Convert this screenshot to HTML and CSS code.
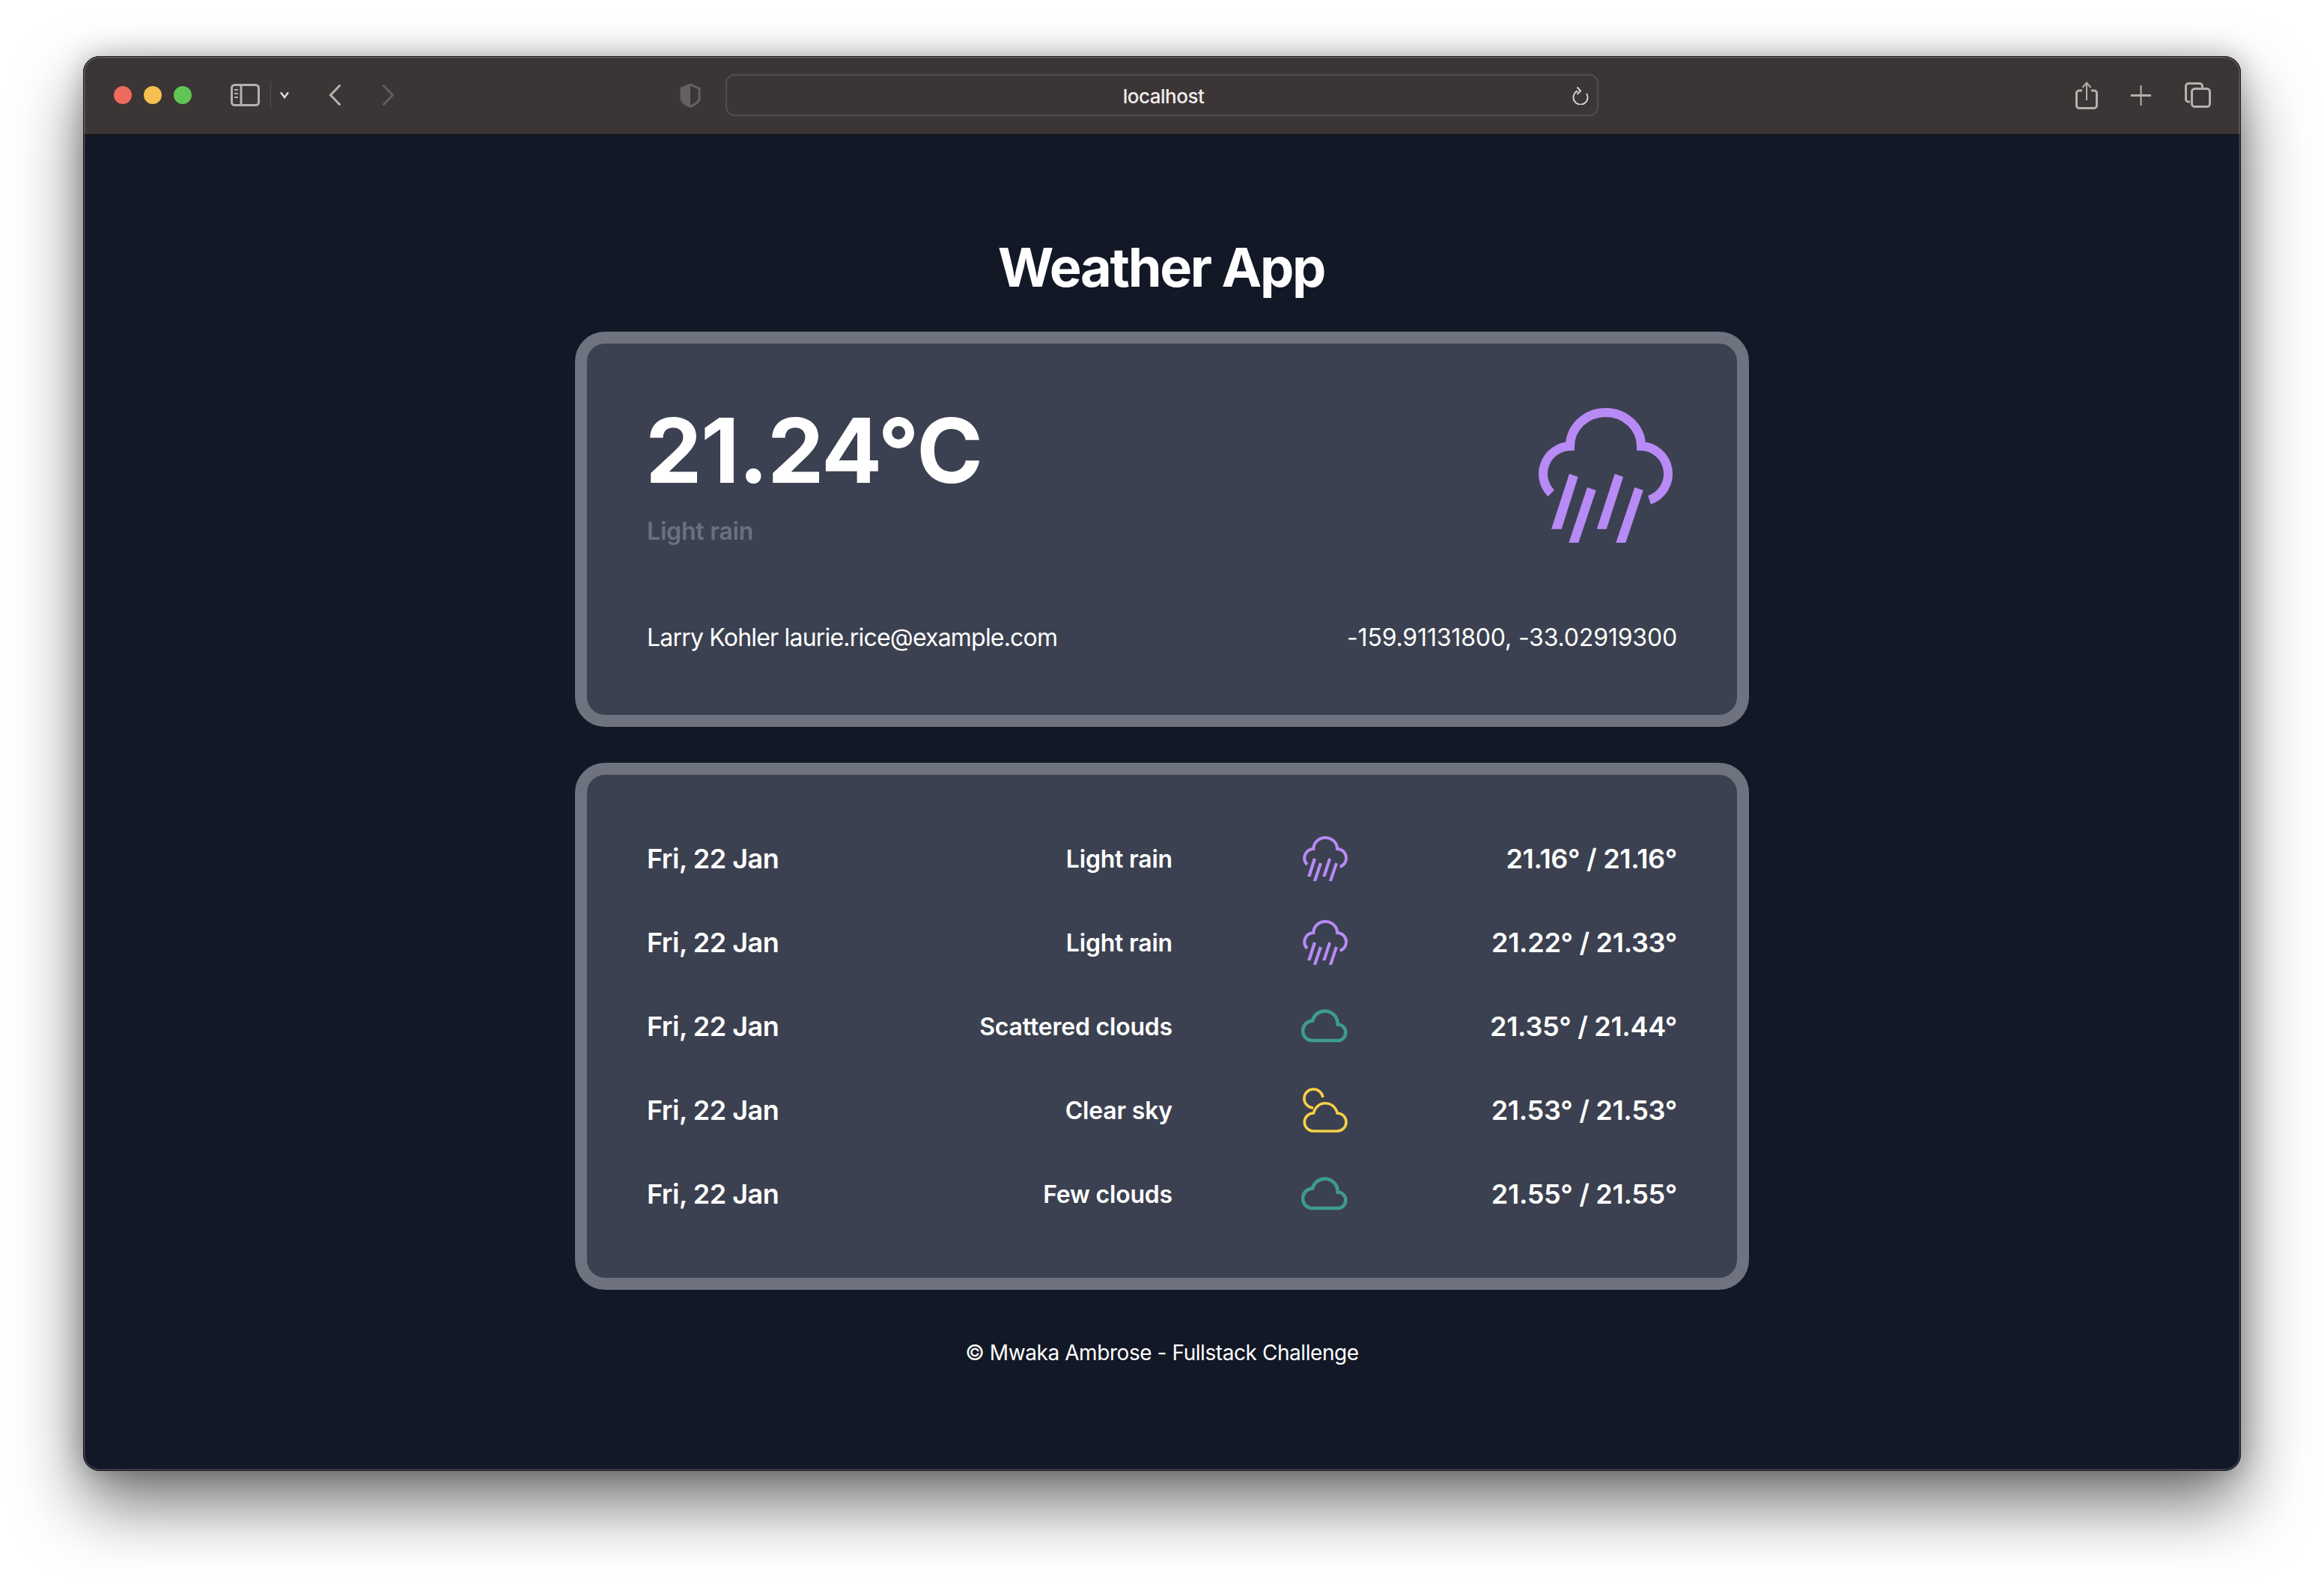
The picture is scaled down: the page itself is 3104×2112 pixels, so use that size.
FILE: index.html
```html
<!DOCTYPE html>
<html lang="en">
<head>
    <meta charset="UTF-8">
    <meta name="viewport" content="width=device-width, initial-scale=1.0">
    <title>Weather App</title>
    <link rel="stylesheet" href="styles.css">
</head>
<body>
    <svg class="icon-defs" width="0" height="0">
        <symbol id="icon-rain" viewBox="-6 -6 192 192">
            <path class="line" stroke-width="12" d="M17.7 114A37 37 0 0 1 43 51A47.500 45 0 0 1 138 51A37 37 0 0 1 149 123"/>
            <polygon class="solid" points="42,88 53.7,92 31.7,161.7 18,161.7"/>
            <polygon class="solid" points="66,106 77.7,110 54.3,180 41.3,180"/>
            <polygon class="solid" points="102.7,88 114,92 91.7,161.7 78.7,161.7"/>
            <polygon class="solid" points="129.3,106 140.7,110 117.3,180 104.3,180"/>
        </symbol>
        <symbol id="icon-cloud" viewBox="0 -11 64 64">
            <path class="line" stroke-width="4.6" d="M13 40A13.3 13.3 0 0 1 15 13.6A17 17 0 0 1 48.5 18.5A10.8 10.8 0 0 1 50 40Z"/>
        </symbol>
        <symbol id="icon-sun-cloud" viewBox="-2 -2 64 64">
            <path class="line" stroke-width="3.6" d="M14 27A12.5 12.5 0 1 1 26.8 13"/>
            <path class="line" stroke-width="3.6" d="M14 58A12 12 0 0 1 14.5 34A16 16 0 0 1 46 34A12 12 0 0 1 46 58Z"/>
        </symbol>
    </svg>

    <div class="window">
        <!-- Browser toolbar -->
        <header class="toolbar">
            <div class="traffic">
                <span class="dot dot-red"></span>
                <span class="dot dot-yellow"></span>
                <span class="dot dot-green"></span>
            </div>
            <svg class="tb-sidebar" width="39" height="30" viewBox="0 0 39 30">
                <rect x="1.5" y="1.5" width="36" height="27" rx="4" class="tb-stroke" stroke-width="3"/>
                <path class="tb-stroke" stroke-width="3" d="M14 2V28"/>
                <path class="tb-stroke" stroke-width="2" d="M5 8H10M5 13H10M5 18H10"/>
            </svg>
            <span class="tb-sep"></span>
            <svg class="tb-chevron" width="14" height="10" viewBox="0 0 14 10">
                <path fill="none" stroke="#e4e1e0" stroke-width="2.4" d="M2 1.5L7 8L12 1.5"/>
            </svg>
            <svg class="tb-back" width="16" height="28" viewBox="0 0 16 28">
                <path class="tb-stroke" stroke-width="3" stroke-linecap="round" d="M14.5 1.5L2.5 14L14.5 26.5"/>
            </svg>
            <svg class="tb-forward" width="16" height="28" viewBox="0 0 16 28">
                <path fill="none" stroke="#625d5d" stroke-width="3" stroke-linecap="round" d="M1.5 1.5L13.5 14L1.5 26.5"/>
            </svg>
            <svg class="tb-shield" width="28" height="33" viewBox="0 0 28 33">
                <path fill="none" stroke="#656161" stroke-width="3" d="M14 2L26 7V21C26 25 20 29 14 31C8 29 2 25 2 21V7Z"/>
                <path fill="#656161" d="M14 2L2 7V21C2 25 8 29 14 31Z"/>
            </svg>
            <div class="address">
                <span></span>
                <span class="address-text">localhost</span>
                <svg class="tb-reload" width="23" height="25" viewBox="0 0 23 25">
                    <path fill="none" stroke="#d6d3d2" stroke-width="2" d="M8 6.5A9.5 9.5 0 1 0 20 10"/>
                    <path fill="none" stroke="#d6d3d2" stroke-width="2" d="M7.5 1.5L12 6.5L7.5 11"/>
                </svg>
            </div>
            <svg class="tb-share" width="30" height="37" viewBox="0 0 30 37">
                <path class="tb-stroke" stroke-width="3" d="M9 12H5A3.5 3.5 0 0 0 1.5 15.5V32A3.5 3.5 0 0 0 5 35.5H25A3.5 3.5 0 0 0 28.5 32V15.5A3.5 3.5 0 0 0 25 12H21"/>
                <path class="tb-stroke" stroke-width="2" d="M15 2V25M9.5 8L15 1.5L20.500 8"/>
            </svg>
            <svg class="tb-plus" width="27" height="27" viewBox="0 0 27 27">
                <path class="tb-stroke" stroke-width="2" d="M13.500 0V27"/>
                <path class="tb-stroke" stroke-width="3" d="M0 13.500H27"/>
            </svg>
            <svg class="tb-tabs" width="35" height="34" viewBox="0 0 35 34">
                <path class="tb-stroke" stroke-width="3" d="M7 26H5A3.500 3.500 0 0 1 1.500 22.500V5A3.500 3.500 0 0 1 5 1.500H20A3.500 3.500 0 0 1 23.500 5V8"/>
                <rect x="9.500" y="8.500" width="24" height="24" rx="4" class="tb-stroke" stroke-width="3"/>
            </svg>
        </header>

        <!-- Page -->
        <main class="page">
            <h1 class="title">Weather App</h1>

            <section class="card current">
                <div class="current-top">
                    <div>
                        <div class="current-temp">21.24°C</div>
                        <div class="current-desc">Light rain</div>
                    </div>
                    <svg class="icon-large purple"><use href="#icon-rain"/></svg>
                </div>
                <div class="current-bottom">
                    <span class="current-user">Larry Kohler laurie.rice@example.com</span>
                    <span class="current-coords">-159.91131800, -33.02919300</span>
                </div>
            </section>

            <section class="card forecast">
                <div class="row">
                    <span class="row-date">Fri, 22 Jan</span>
                    <span class="row-desc">Light rain</span>
                    <svg class="row-icon purple"><use href="#icon-rain"/></svg>
                    <span class="row-temp">21.16° / 21.16°</span>
                </div>
                <div class="row">
                    <span class="row-date">Fri, 22 Jan</span>
                    <span class="row-desc">Light rain</span>
                    <svg class="row-icon purple"><use href="#icon-rain"/></svg>
                    <span class="row-temp">21.22° / 21.33°</span>
                </div>
                <div class="row">
                    <span class="row-date">Fri, 22 Jan</span>
                    <span class="row-desc">Scattered clouds</span>
                    <svg class="row-icon teal"><use href="#icon-cloud"/></svg>
                    <span class="row-temp">21.35° / 21.44°</span>
                </div>
                <div class="row">
                    <span class="row-date">Fri, 22 Jan</span>
                    <span class="row-desc">Clear sky</span>
                    <svg class="row-icon yellow"><use href="#icon-sun-cloud"/></svg>
                    <span class="row-temp">21.53° / 21.53°</span>
                </div>
                <div class="row">
                    <span class="row-date">Fri, 22 Jan</span>
                    <span class="row-desc">Few clouds</span>
                    <svg class="row-icon teal"><use href="#icon-cloud"/></svg>
                    <span class="row-temp">21.55° / 21.55°</span>
                </div>
            </section>

            <footer class="footer">© Mwaka Ambrose - Fullstack Challenge</footer>
        </main>
    </div>
</body>
</html>
```

FILE: styles.css
```css
* {
    box-sizing: border-box;
}
html, body {
    margin: 0;
    height: 100%;
}
body {
    background-color: #fff;
    font-family: Inter, "Noto Sans", sans-serif;
    color: #fff;
    padding: 75px 111px 147px 111px;
    overflow: hidden;
}
.icon-defs {
    display: block;
}
.line {
    fill: none;
    stroke: currentColor;
}
.solid {
    fill: currentColor;
}
.purple {
    color: #b88af6;
}
.teal {
    color: #3f9b8a;
}
.yellow {
    color: #f8d045;
}

/* Window */
.window {
    position: relative;
    display: flex;
    flex-direction: column;
    height: 1890px;
    background-color: #121826;
    border-radius: 22px;
    overflow: hidden;
    box-shadow: 0 44px 90px rgba(0, 0, 0, 0.55), 0 0 36px rgba(0, 0, 0, 0.25);
}
.window::after {
    content: "";
    position: absolute;
    inset: 0;
    border-radius: 22px;
    border: 1px solid #1a1a1c;
    box-shadow: inset 0 0 0 1.5px rgba(255, 255, 255, 0.2);
    pointer-events: none;
}

/* Toolbar */
.toolbar {
    display: flex;
    align-items: center;
    flex-shrink: 0;
    height: 106px;
    padding-left: 41px;
    background-color: #3c3535;
    border-bottom: 2px solid #17161a;
}
.traffic {
    display: flex;
    gap: 16px;
}
.dot {
    width: 24px;
    height: 24px;
    border-radius: 50%;
}
.dot-red { background-color: #ee6a5f; }
.dot-yellow { background-color: #f5bf4f; }
.dot-green { background-color: #61c554; }
.tb-stroke {
    fill: none;
    stroke: #b5b0af;
}
.tb-sidebar { margin-left: 52px; }
.tb-sep {
    width: 1px;
    height: 36px;
    margin-left: 14px;
    background-color: #545050;
}
.tb-chevron { margin-left: 11px; }
.tb-back { margin-left: 52px; }
.tb-forward { margin-left: 56px; }
.tb-shield { margin-left: 381px; }
.address {
    display: grid;
    grid-template-columns: 1fr auto 1fr;
    align-items: center;
    width: 1166px;
    height: 56px;
    margin-left: 33px;
    padding: 0 11px 0 15px;
    border: 2px solid #524d4d;
    border-radius: 12px;
    font-size: 26px;
    font-weight: 500;
    letter-spacing: -0.5px;
    color: #efeded;
}
.address-text {
    padding-top: 2px;
}
.tb-reload {
    justify-self: end;
}
.tb-share { margin-left: 637px; }
.tb-plus { margin-left: 44px; }
.tb-tabs { margin-left: 45px; }

/* Page */
.page {
    display: flex;
    flex-direction: column;
    align-items: center;
    flex-grow: 1;
    padding-top: 136px;
}
.title {
    margin: 0 0 46px -2px;
    font-size: 72px;
    line-height: 80px;
    font-weight: 700;
    letter-spacing: -2.3px;
}
.card {
    width: 1568px;
    padding: 80px;
    background-color: #3b4150;
    border: 16px solid #6f737f;
    border-radius: 40px;
}
.current-top {
    display: flex;
    justify-content: space-between;
    height: 192px;
}
.current-temp {
    margin-left: -2px;
    padding-top: 3px;
    font-size: 120px;
    line-height: 120px;
    font-weight: 700;
    letter-spacing: -1.5px;
}
.current-desc {
    margin-top: 24px;
    font-size: 32px;
    line-height: 48px;
    font-weight: 600;
    letter-spacing: -0.2px;
    color: #6b7080;
}
.icon-large {
    width: 192px;
    height: 192px;
}
.current-bottom {
    display: flex;
    justify-content: space-between;
    padding-top: 2px;
    margin-top: 96px;
    font-size: 32px;
    line-height: 46px;
}
.current-user {
    letter-spacing: -0.8px;
}
.current-coords {
    letter-spacing: -0.17px;
}

/* Forecast */
.forecast {
    margin-top: 48px;
    padding-top: 56px;
    padding-bottom: 56px;
}
.row {
    display: grid;
    grid-template-columns: 240px 462px 408px 1fr;
    align-items: center;
    height: 112px;
}
.row-date {
    font-size: 36px;
    font-weight: 600;
    letter-spacing: -0.5px;
}
.row-desc {
    font-size: 32px;
    font-weight: 600;
    letter-spacing: -0.2px;
    text-align: right;
}
.row-icon {
    justify-self: center;
    width: 64px;
    height: 64px;
}
.row-temp {
    font-size: 36px;
    font-weight: 600;
    letter-spacing: -0.3px;
    text-align: right;
}
.footer {
    margin-top: 64px;
    font-size: 28px;
    line-height: 40px;
    letter-spacing: -0.43px;
}
```
